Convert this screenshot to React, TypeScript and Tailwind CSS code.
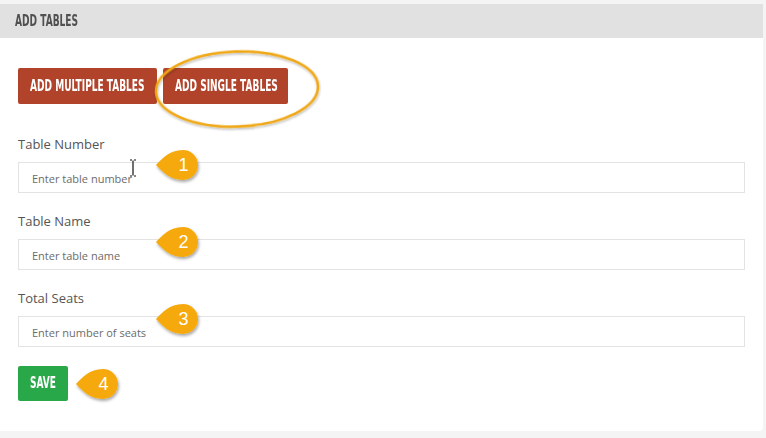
import React from "react";

function Callout({ n }: { n: string }) {
  return (
    <div className="relative w-[44px] h-[34px]">
      <svg width="50" height="40" viewBox="0 0 50 40" className="absolute left-0 top-0">
        <defs>
          <filter id={`sh${n}`} x="-30%" y="-30%" width="160%" height="160%">
            <feDropShadow dx="1" dy="2" stdDeviation="1.6" floodColor="#000" floodOpacity="0.35" />
          </filter>
        </defs>
        <path
          d="M1 16 C 8 9, 14 1.5, 28 1 A 15 15 0 1 1 28 31 C 14 30.5, 8 23, 1 16 Z"
          fill="#f6a90f"
          filter={`url(#sh${n})`}
        />
      </svg>
      <span className="absolute left-[20px] top-[4px] w-[17px] text-center text-white text-[18px] leading-[24px] font-['Liberation_Sans',sans-serif]">
        {n}
      </span>
    </div>
  );
}

function Cond({ children, className }: { children: React.ReactNode; className?: string }) {
  return (
    <span
      className={
        "inline-block origin-left whitespace-nowrap font-['DejaVu_Sans_Condensed','DejaVu_Sans',sans-serif] font-bold " +
        (className ?? "")
      }
    >
      {children}
    </span>
  );
}

function Field({ label, placeholder, n }: { label: string; placeholder: string; n: string }) {
  return (
    <div className="flex flex-col">
      <div className="h-[18px] text-[13px] leading-[18px] text-[#555] font-['Open_Sans','Noto_Sans',sans-serif]">{label}</div>
      <div className="relative mt-[9px] h-[31px] w-[727px] border border-[#e3e3e3] bg-white flex items-center pl-[13px] pt-[3px]">
        <span className="text-[11px] text-[#6b6b6b] font-['Open_Sans','Noto_Sans',sans-serif]">{placeholder}</span>
        <div className="absolute left-[136px] top-[-14px]">
          <Callout n={n} />
        </div>
      </div>
    </div>
  );
}

export default function App() {
  return (
    <div className="w-[766px] h-[438px] bg-[#f4f4f4] pt-[4px] overflow-hidden">
      <div className="relative w-[763px] h-[427px] bg-white rounded-br-[4px]">
        <div className="h-[34px] bg-[#e1e1e1] flex items-center pl-[15px]">
          <Cond className="text-[16px] text-[#505050] scale-x-[0.63]">ADD TABLES</Cond>
        </div>
        <div className="px-[18px]">
          <div className="mt-[30px] flex gap-[6px]">
            <div className="w-[139px] h-[36px] bg-[#b0432a] rounded-[2px] flex items-center pl-[12px] text-white text-[15px]">
              <Cond className="scale-x-[0.67]">ADD MULTIPLE TABLES</Cond>
            </div>
            <div className="w-[125px] h-[36px] bg-[#b0432a] rounded-[2px] flex items-center pl-[12px] text-white text-[15px]">
              <Cond className="scale-x-[0.67]">ADD SINGLE TABLES</Cond>
            </div>
          </div>
          <div className="mt-[31px] flex flex-col gap-[19px]">
            <Field label="Table Number" placeholder="Enter table number" n="1" />
            <Field label="Table Name" placeholder="Enter table name" n="2" />
            <Field label="Total Seats" placeholder="Enter number of seats" n="3" />
          </div>
          <div className="mt-[17px] flex items-center">
            <div className="w-[50px] h-[35px] bg-[#29a84a] rounded-[2px] flex items-center pl-[12px] text-white text-[15px]">
              <Cond className="scale-x-[0.67]">SAVE</Cond>
            </div>
            <div className="ml-[7px] mt-[4px]">
              <Callout n="4" />
            </div>
          </div>
        </div>
        <svg className="absolute left-[150px] top-[40px]" width="180" height="90" viewBox="0 0 180 90">
          <defs>
            <filter id="esh" x="-10%" y="-20%" width="120%" height="140%">
              <feDropShadow dx="0.5" dy="1.5" stdDeviation="1.2" floodColor="#000" floodOpacity="0.3" />
            </filter>
          </defs>
          <ellipse
            cx="87"
            cy="45"
            rx="81"
            ry="37.5"
            fill="none"
            stroke="#f0a712"
            strokeWidth="2.5"
            transform="rotate(-2 87 45)"
            filter="url(#esh)"
          />
        </svg>
        <svg className="absolute left-[129px] top-[155px]" width="8" height="18" viewBox="0 0 8 18">
          <path d="M1 1 H3 M5 1 H7 M4 1.5 V16.5 M1 17 H3 M5 17 H7" stroke="#111" strokeWidth="1.2" fill="none" />
        </svg>
      </div>
    </div>
  );
}
